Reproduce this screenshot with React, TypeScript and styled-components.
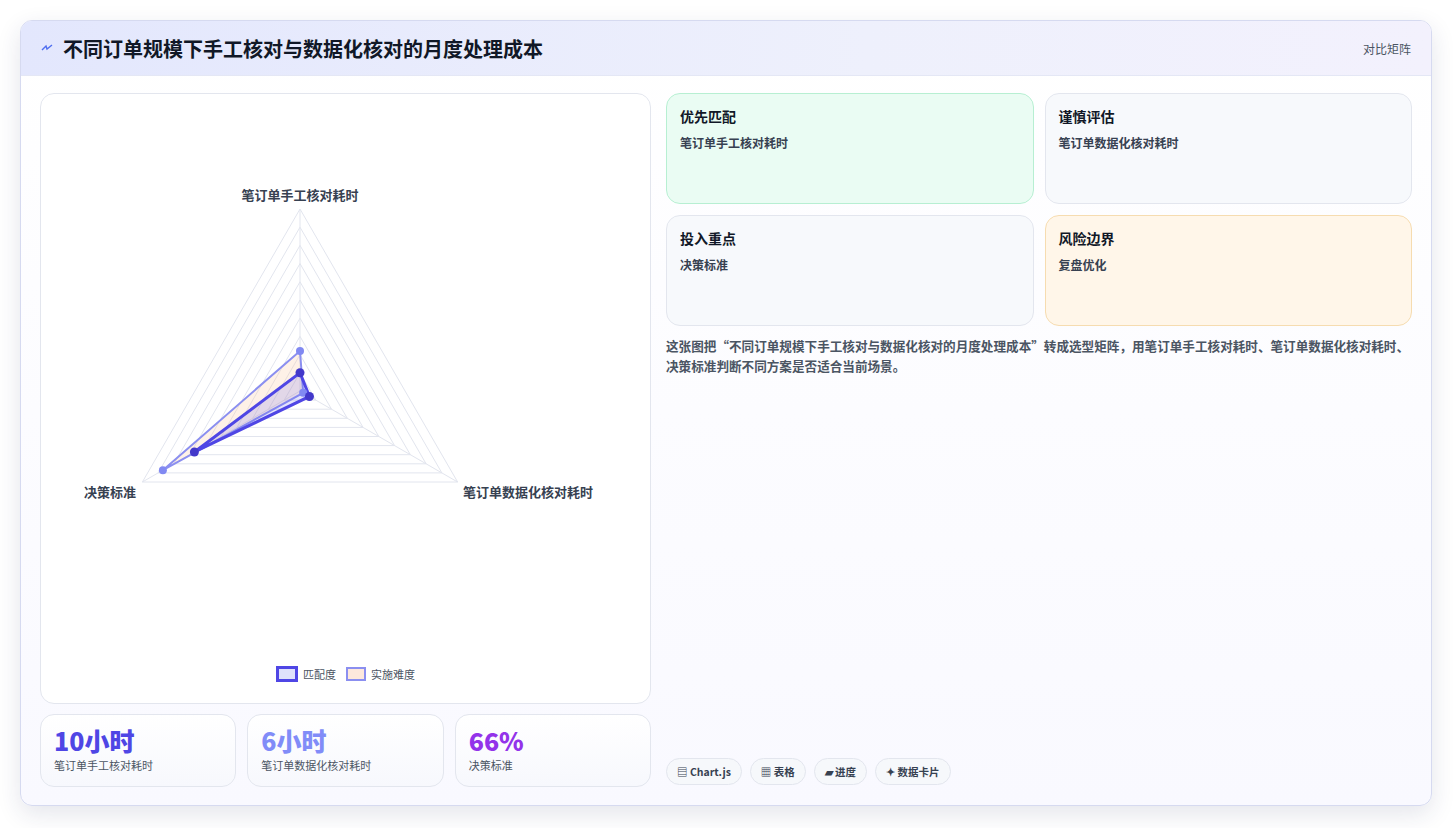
import React from 'react';
import styled, { createGlobalStyle } from 'styled-components';

const Global = createGlobalStyle`
  html, body { margin: 0; padding: 0; background: #fff; }
  body { font-family: "Noto Sans CJK SC", "Noto Sans", sans-serif; color: #1f2937; }
`;

const Page = styled.div`
  padding: 20px 21px 22px 20px;
`;

const Frame = styled.div`
  height: 784px;
  border: 1px solid #d6daf0;
  border-radius: 12px;
  box-shadow: 0 8px 24px rgba(30, 40, 90, 0.12);
  background: linear-gradient(180deg, #ffffff 0%, #f9f9ff 100%);
  overflow: hidden;
  display: flex;
  flex-direction: column;
`;

const Header = styled.div`
  height: 54px;
  flex-shrink: 0;
  display: flex;
  align-items: center;
  justify-content: space-between;
  padding: 0 20px;
  background: linear-gradient(90deg, #e3e7fd 0%, #eef0fc 60%, #f3f1fd 100%);
  border-bottom: 1px solid #e4e7f5;
`;

const Title = styled.h1`
  margin: 0;
  font-size: 20px;
  font-weight: 700;
  color: #111827;
  display: flex;
  align-items: center;
  gap: 10px;
`;

const Tag = styled.span`
  font-size: 12px;
  color: #4b5563;
`;

const Body = styled.div`
  flex: 1;
  display: grid;
  grid-template-columns: 611px 1fr;
  gap: 15px;
  padding: 17px 19px 18px 19px;
`;

const LeftCol = styled.div`
  display: flex;
  flex-direction: column;
  gap: 10px;
`;

const ChartCard = styled.div`
  height: 609px;
  border: 1px solid #e3e6ee;
  border-radius: 14px;
  background: #fff;
  position: relative;
`;

const AxisLabel = styled.span<{ x: number; y: number }>`
  position: absolute;
  left: ${p => p.x}px;
  top: ${p => p.y}px;
  transform: translateX(-50%);
  font-size: 13px;
  font-weight: 700;
  color: #374151;
  white-space: nowrap;
`;

const Legend = styled.div`
  position: absolute;
  left: 0;
  right: 0;
  bottom: 21px;
  display: flex;
  justify-content: center;
  gap: 10px;
  font-size: 11px;
  color: #4b5563;
`;

const LegendItem = styled.span`
  display: flex;
  align-items: center;
  gap: 5px;
`;

const Swatch = styled.span<{ border: string; fill: string; w: number }>`
  width: 16px;
  height: 10px;
  border: ${p => p.w}px solid ${p => p.border};
  background: ${p => p.fill};
`;

const Stats = styled.div`
  display: grid;
  grid-template-columns: repeat(3, 1fr);
  gap: 11px;
`;

const Stat = styled.div`
  height: 73px;
  box-sizing: border-box;
  border: 1px solid #e3e6ee;
  border-radius: 14px;
  background: linear-gradient(180deg, #fff 0%, #f7f8fd 100%);
  padding: 8px 13px;
`;

const StatValue = styled.div<{ color: string }>`
  font-size: 25px;
  font-weight: 900;
  color: ${p => p.color};
  line-height: 34px;
`;

const StatLabel = styled.div`
  font-size: 11px;
  color: #4b5563;
`;

const RightCol = styled.div`
  display: flex;
  flex-direction: column;
`;

const Grid = styled.div`
  display: grid;
  grid-template-columns: 1fr 1fr;
  gap: 11px;
`;

const Tile = styled.div<{ bg: string; bd: string }>`
  height: 111px;
  box-sizing: border-box;
  border: 1px solid ${p => p.bd};
  background: ${p => p.bg};
  border-radius: 14px;
  padding: 12px 13px;
`;

const TileTitle = styled.div`
  font-size: 14px;
  font-weight: 700;
  color: #111827;
`;

const TileText = styled.div`
  margin-top: 8px;
  font-size: 12px;
  font-weight: 700;
  color: #374151;
`;

const Desc = styled.p`
  margin: 10px 0 0;
  font-size: 12.6px;
  line-height: 20px;
  font-weight: 700;
  color: #4b5563;
`;

const Chips = styled.div`
  margin-top: auto;
  margin-bottom: 2px;
  display: flex;
  gap: 8px;
`;

const Chip = styled.span`
  height: 27px;
  box-sizing: border-box;
  padding: 0 10px;
  display: inline-flex;
  align-items: center;
  gap: 4px;
  border: 1px solid #e3e6ee;
  border-radius: 14px;
  background: #f6f8fb;
  font-size: 10.5px;
  font-weight: 700;
  color: #374151;
`;

const CX = 259, CY = 297, R = 182;
const pt = (i: number, r: number) => {
  const a = -Math.PI / 2 + (i * 2 * Math.PI) / 3;
  return [CX + Math.cos(a) * R * r, CY + Math.sin(a) * R * r];
};
const poly = (vals: number[]) => vals.map((v, i) => pt(i, v).join(',')).join(' ');

const Radar = () => {
  const match = [0.1, 0.06, 0.67];
  const diff = [0.22, 0.02, 0.87];
  return (
    <svg width="609" height="520" style={{ position: 'absolute', left: 0, top: 0 }}>
      {Array.from({ length: 10 }, (_, k) => (
        <polygon key={k} points={poly([(k + 1) / 10, (k + 1) / 10, (k + 1) / 10])} fill="none" stroke="#e2e5ee" strokeWidth="1" />
      ))}
      {[0, 1, 2].map(i => {
        const [x, y] = pt(i, 1);
        return <line key={i} x1={CX} y1={CY} x2={x} y2={y} stroke="#e2e5ee" />;
      })}
      <polygon points={poly(diff)} fill="rgba(251, 200, 160, 0.25)" stroke="#8b8ff0" strokeWidth="2" />
      <polygon points={poly(match)} fill="rgba(99, 102, 241, 0.18)" stroke="#4f46e5" strokeWidth="3" />
      {diff.map((v, i) => {
        const [x, y] = pt(i, v);
        return <circle key={'d' + i} cx={x} cy={y} r="4" fill="#8189f2" />;
      })}
      {match.map((v, i) => {
        const [x, y] = pt(i, v);
        return <circle key={'m' + i} cx={x} cy={y} r="4.5" fill="#4338ca" />;
      })}
    </svg>
  );
};

export default function App() {
  return (
    <Page>
      <Global />
      <Frame>
        <Header>
          <Title>
            <svg width="12" height="10" viewBox="0 0 12 10">
              <path d="M1 7 L5 3 L6 6 L11 2" fill="none" stroke="#4f6ef0" strokeWidth="1.4" />
            </svg>
            不同订单规模下手工核对与数据化核对的月度处理成本
          </Title>
          <Tag>对比矩阵</Tag>
        </Header>
        <Body>
          <LeftCol>
            <ChartCard>
              <Radar />
              <AxisLabel x={259} y={91}>笔订单手工核对耗时</AxisLabel>
              <AxisLabel x={69} y={388}>决策标准</AxisLabel>
              <AxisLabel x={487} y={388}>笔订单数据化核对耗时</AxisLabel>
              <Legend>
                <LegendItem><Swatch border="#4f46e5" fill="#dfe1fb" w={3} />匹配度</LegendItem>
                <LegendItem><Swatch border="#8b8ff0" fill="#fde8dc" w={2} />实施难度</LegendItem>
              </Legend>
            </ChartCard>
            <Stats>
              <Stat><StatValue color="#4f46e5">10小时</StatValue><StatLabel>笔订单手工核对耗时</StatLabel></Stat>
              <Stat><StatValue color="#818cf8">6小时</StatValue><StatLabel>笔订单数据化核对耗时</StatLabel></Stat>
              <Stat><StatValue color="#9333ea">66%</StatValue><StatLabel>决策标准</StatLabel></Stat>
            </Stats>
          </LeftCol>
          <RightCol>
            <Grid>
              <Tile bg="#eafcf3" bd="#b7efd2"><TileTitle>优先匹配</TileTitle><TileText>笔订单手工核对耗时</TileText></Tile>
              <Tile bg="#f7f9fc" bd="#e3e6ee"><TileTitle>谨慎评估</TileTitle><TileText>笔订单数据化核对耗时</TileText></Tile>
              <Tile bg="#f7f9fc" bd="#e3e6ee"><TileTitle>投入重点</TileTitle><TileText>决策标准</TileText></Tile>
              <Tile bg="#fff6e9" bd="#f6dcb0"><TileTitle>风险边界</TileTitle><TileText>复盘优化</TileText></Tile>
            </Grid>
            <Desc>这张图把“不同订单规模下手工核对与数据化核对的月度处理成本”转成选型矩阵，用笔订单手工核对耗时、笔订单数据化核对耗时、决策标准判断不同方案是否适合当前场景。</Desc>
            <Chips>
              <Chip>▤ Chart.js</Chip>
              <Chip>▦ 表格</Chip>
              <Chip>▰ 进度</Chip>
              <Chip>✦ 数据卡片</Chip>
            </Chips>
          </RightCol>
        </Body>
      </Frame>
    </Page>
  );
}
